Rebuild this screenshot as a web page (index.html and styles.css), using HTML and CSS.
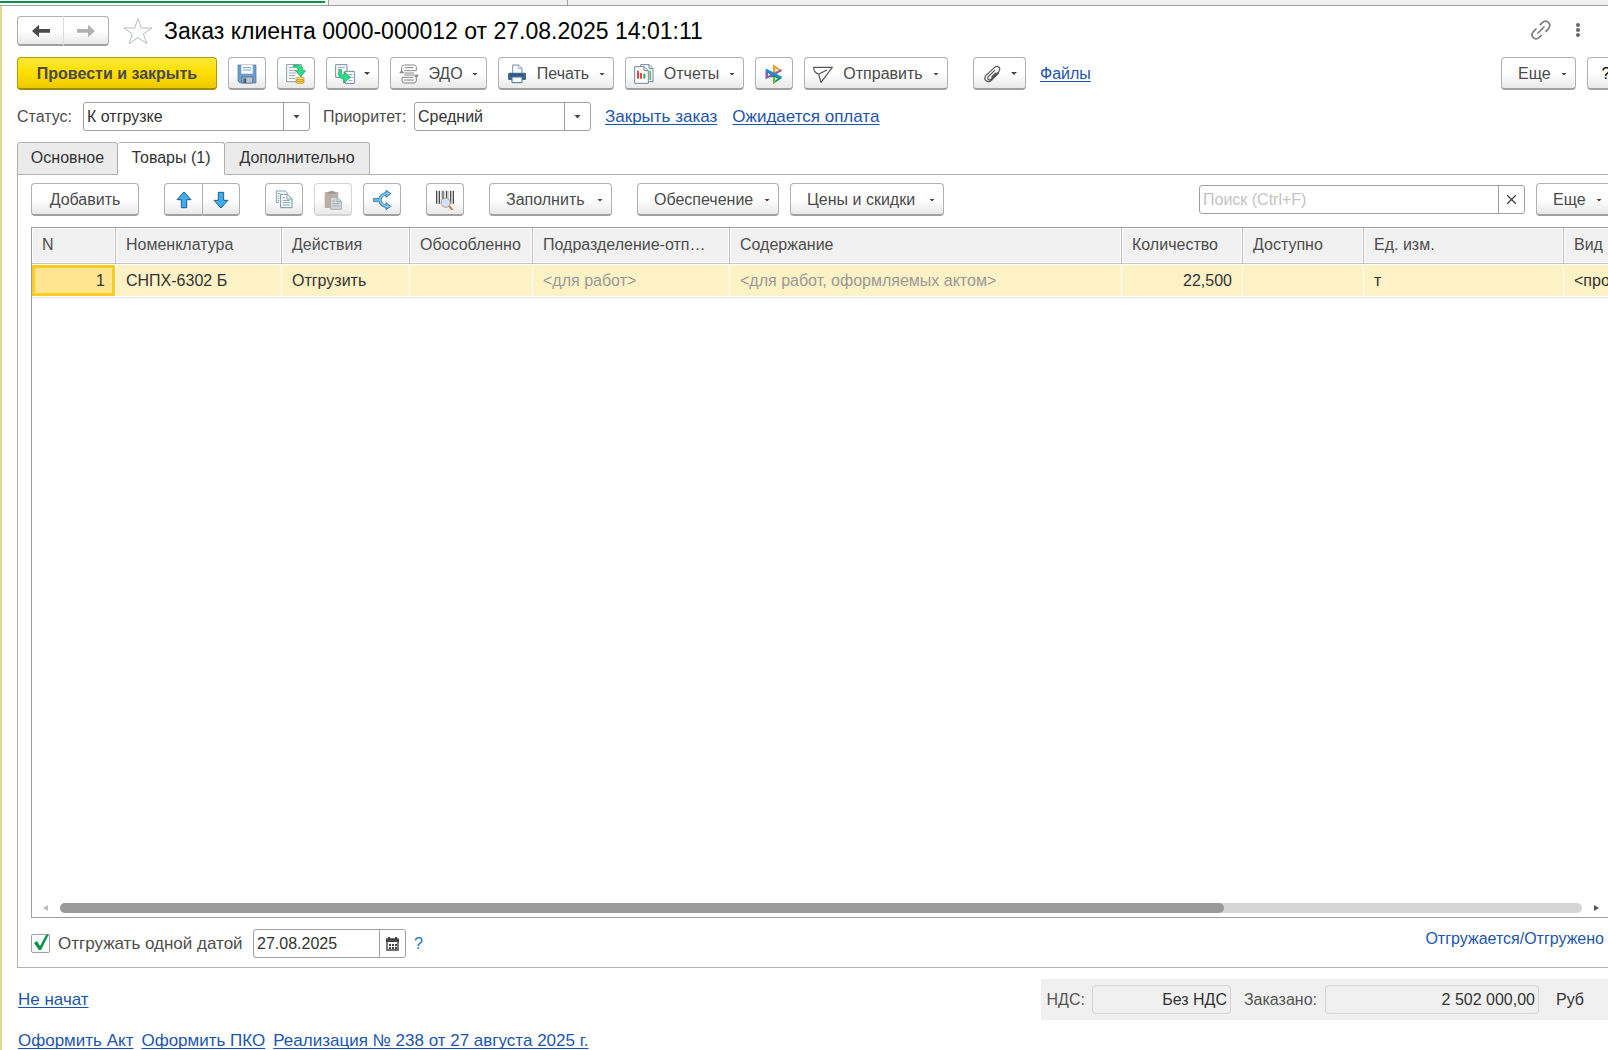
FILE: index.html
```html
<!DOCTYPE html>
<html lang="ru">
<head>
<meta charset="utf-8">
<title>Заказ клиента 0000-000012 от 27.08.2025 14:01:11</title>
<link rel="stylesheet" href="styles.css">
</head>
<body>
<div class="app">
  <div class="window-tabs"><span class="window-tab window-tab-active"></span><span class="window-tab"></span></div>
  <main class="form">
    <header class="title-row">
      <div class="button-pair nav-pair">
        <button type="button" class="btn" aria-label="Назад"><svg width="18" height="14" viewBox="0 0 54 42"><path d="M0 21 21 2v13h33v11H21v14z" fill="#4a4a4a"/></svg></button>
        <button type="button" class="btn" aria-label="Вперед"><svg width="18" height="14" viewBox="0 0 54 42"><path d="M54 21 33 2v13H0v11h33v14z" fill="#b2b2b2"/></svg></button>
      </div>
      <svg class="star" width="30" height="28" viewBox="0 0 90 84"><path d="M45 5 55 33H87L61 51 72 80 45 62 18 80 28 51 3 33H35z" fill="#fff" stroke="#b4bac2" stroke-width="3"/></svg>
      <h1>Заказ клиента 0000-000012 от 27.08.2025 14:01:11</h1>
      <div class="title-tools">
        <svg width="20" height="20" viewBox="0 0 60 60" fill="none" stroke="#7b7b7b" stroke-width="5" stroke-linecap="round"><path d="M21 39 39 21M28 14l6-6c12-12 30 4 18 18l-7 8M15 27l-8 8c-11 13 4 28 17 18l7-7"/></svg>
        <svg width="4" height="14" viewBox="0 0 12 42" fill="#686868"><circle cx="6" cy="6" r="6"/><circle cx="6" cy="21" r="6"/><circle cx="6" cy="36" r="6"/></svg>
      </div>
    </header>

    <div class="toolbar">
      <button type="button" class="btn btn-primary">Провести и закрыть</button>
      <button type="button" class="btn btn-icon" aria-label="Записать"><svg width="20" height="20" viewBox="0 0 60 60"><path d="M3 3h54v54H9l-6-6z" fill="#6f9bd1" stroke="#49709f" stroke-width="2"/><path d="M13 3h34v26H13z" fill="#fff"/><path d="M18 11h24M18 18h24" stroke="#6f9bd1" stroke-width="3"/><path d="M15 39h32v18H15z" fill="#c3c8cc" stroke="#49607c" stroke-width="2"/><path d="M19 43h9v14h-9z" fill="#3e618b"/></svg></button>
      <button type="button" class="btn btn-icon" aria-label="Провести"><svg width="20" height="20" viewBox="0 0 60 60"><path d="M2 1h44v52H2z" fill="#fff" stroke="#8799ac" stroke-width="3"/><path d="M8 11h14M8 19h22M8 27h22M8 35h20M8 43h20" stroke="#93a5b5" stroke-width="3"/><path d="M30 43h24v12c0 6-24 6-24 0z" fill="#f7c948" stroke="#b68a24" stroke-width="2"/><ellipse cx="42" cy="43" rx="12" ry="4" fill="#ffe58b" stroke="#b68a24" stroke-width="2"/><path d="M30 50c6 4 18 4 24 0" fill="none" stroke="#b68a24" stroke-width="2"/><path d="M22 4c20-4 29 4 29 16h8L44 37 28 20h9c0-8-5-11-15-10z" fill="#28e087" stroke="#148c50" stroke-width="2"/></svg></button>
      <button type="button" class="btn btn-icon-menu" aria-label="Создать на основании"><svg width="20" height="20" viewBox="0 0 60 60"><path d="M2 2h34v38H2z" fill="#fff" stroke="#728aa0" stroke-width="3"/><path d="M8 10h22M8 16h14" stroke="#93a5b5" stroke-width="3"/><path d="M30 22h28v36H30z" fill="#fff" stroke="#728aa0" stroke-width="3"/><path d="M40 32h12M44 40h10M40 50h12" stroke="#93a5b5" stroke-width="3"/><path d="M12 18c-4 16 0 24 14 27v12L46 40 27 23v10c-7 0-9-5-7-13z" fill="#28e087" stroke="#148c50" stroke-width="2"/></svg><i class="caret"></i></button>
      <button type="button" class="btn btn-menu edo"><svg width="20" height="20" viewBox="0 0 60 60" fill="none" stroke="#888" stroke-width="3"><path d="M8 21V10q0-7 8-7h30q6 0 6 7v10H16M52 38v12q0 7-7 7H15q-6 0-6-7V40h34"/><path d="M17 11h27M16 27h29M16 33h29M16 48h28"/><path d="M0 28 8 18l8 10zM44 32h16l-8 10z" fill="#888" stroke="none"/></svg><span>ЭДО</span><i class="caret"></i></button>
      <button type="button" class="btn btn-menu print"><svg width="20" height="20" viewBox="0 0 60 60"><path d="M17 3h18l10 10v16H17z" fill="#fff" stroke="#7790a8" stroke-width="3"/><path d="M34 3v11h11" fill="none" stroke="#7790a8" stroke-width="2"/><rect x="3" y="26" width="54" height="22" rx="4" fill="#416990"/><path d="M8 33h44" stroke="#29496a" stroke-width="3"/><path d="M15 39h30v17H15z" fill="#fff" stroke="#416990" stroke-width="3"/></svg><span>Печать</span><i class="caret"></i></button>
      <button type="button" class="btn btn-menu reports"><svg width="20" height="20" viewBox="0 0 60 60"><path d="M20 2h25l12 12v39H20z" fill="#fff" stroke="#71879c" stroke-width="3"/><path d="M45 2v12h12" fill="none" stroke="#71879c" stroke-width="3"/><path d="M49 20v28" stroke="#66a977" stroke-width="5"/><path d="M2 8h28l13 12v38H2z" fill="#fff" stroke="#71879c" stroke-width="3"/><path d="M30 8v12h13" fill="none" stroke="#71879c" stroke-width="3"/><path d="M12 20v24M21 27v17" stroke="#e34740" stroke-width="6"/><path d="M31 29v15" stroke="#35a65b" stroke-width="6"/></svg><span>Отчеты</span><i class="caret"></i></button>
      <button type="button" class="btn btn-icon" aria-label="Сервис"><svg width="18" height="20" viewBox="0 0 54 60"><path d="M24 1 48 18 24 29z" fill="#fa9c22"/><path d="m33 13 17 8-17 10z" fill="#e43659"/><path d="M31 13 43 19 31 25z" fill="#fff"/><path d="m2 14 48 26H2z" fill="#287fc4"/><path d="m2 24 16 10L2 46z" fill="#9b57a7"/><path d="m9 27 7 5-7 4z" fill="#fff"/><path d="m24 33 26 10-26 17z" fill="#138d4c"/><path d="M24 39v21l9-8V39z" fill="#63ba45"/><path d="m31 40 8 4-8 5z" fill="#fff"/><path d="M2 43 50 18" stroke="#8561b1" stroke-width="5"/><path d="m3 17 47 24" stroke="#1994d3" stroke-width="6"/></svg></button>
      <button type="button" class="btn btn-menu send"><svg width="20" height="20" viewBox="0 0 60 60" fill="none" stroke="#555" stroke-width="3.5" stroke-linejoin="round"><path d="M2 10h56L24 55l-7-25C7 28 2 20 2 10zM17 30l25-12"/></svg><span>Отправить</span><i class="caret"></i></button>
      <button type="button" class="btn btn-icon-menu attach" aria-label="Присоединенные файлы"><svg width="20" height="20" viewBox="0 0 60 60" fill="none" stroke="#555" stroke-width="3.5" stroke-linecap="round"><path d="M38 19 19 38c-6 7 3 13 9 7l23-23c7-12-5-19-14-11L12 34c-10 13 5 26 17 14l21-21M41 27 29 39"/></svg><i class="caret"></i></button>
      <a class="files-link" href="#files">Файлы</a>
      <button type="button" class="btn btn-text more push">Еще<i class="caret"></i></button>
      <button type="button" class="btn btn-icon help">?</button>
    </div>

    <div class="status-row">
      <label class="status-label" for="status">Статус:</label>
      <span class="combo combo-status"><select id="status"><option>К отгрузке</option></select><span class="combo-arrow"><i class="caret"></i></span></span>
      <label class="priority-label" for="priority">Приоритет:</label>
      <span class="combo combo-priority"><select id="priority"><option>Средний</option></select><span class="combo-arrow"><i class="caret"></i></span></span>
      <a href="#close">Закрыть заказ</a>
      <a href="#payment">Ожидается оплата</a>
    </div>

    <div class="tabs" role="tablist">
      <button type="button" role="tab" class="tab tab-main" aria-selected="false">Основное</button>
      <button type="button" role="tab" class="tab tab-goods" aria-selected="true">Товары (1)</button>
      <button type="button" role="tab" class="tab tab-extra" aria-selected="false">Дополнительно</button>
    </div>

    <section class="panel">
      <div class="toolbar panel-toolbar">
        <button type="button" class="btn btn-text add">Добавить</button>
        <div class="button-pair group">
          <button type="button" class="btn" aria-label="Вверх"><svg width="16" height="18" viewBox="0 0 48 54"><path d="M24 3 45 26H32v24H16V26H3z" fill="#43adeb" stroke="#17618f" stroke-width="3" stroke-linejoin="round"/></svg></button>
          <button type="button" class="btn" aria-label="Вниз"><svg width="16" height="18" viewBox="0 0 48 54"><path d="M24 51 45 28H32V4H16v24H3z" fill="#43adeb" stroke="#17618f" stroke-width="3" stroke-linejoin="round"/></svg></button>
        </div>
        <button type="button" class="btn btn-icon group" aria-label="Копировать"><svg width="18" height="20" viewBox="0 0 54 60"><path d="M4 38V3h27l8 8M4 38h8" fill="none" stroke="#7e9fb1" stroke-width="3"/><path d="M8 11h8M8 18h5M8 25h5M8 32h5" stroke="#7e9fb1" stroke-width="3"/><path d="M17 13h20l14 13v27H17z" fill="#fff" stroke="#6d91a5" stroke-width="3"/><path d="M36 13v14h15M23 23h8M23 31h22M23 38h22M23 45h22" fill="none" stroke="#7e9fb1" stroke-width="3"/></svg></button>
        <button type="button" class="btn btn-icon" disabled aria-label="Вставить"><svg width="18" height="20" viewBox="0 0 54 60"><rect x="2" y="6" width="41" height="48" rx="3" fill="#bdaea7"/><path d="M11 11q0-7 8-7 4-4 8 0 8 0 8 7z" fill="#999"/><path d="M20 22h20l12 12v24H20z" fill="#d3d6d9" stroke="#aab0b4" stroke-width="3"/><path d="M39 22v13h13M26 33h7M26 41h20M26 48h20" fill="none" stroke="#aab0b4" stroke-width="3"/></svg></button>
        <button type="button" class="btn btn-icon" aria-label="Разбить строку"><svg width="20" height="20" viewBox="0 0 60 60"><path d="M3 30h20C27 15 34 11 47 11M23 30c4 15 11 19 24 19" fill="none" stroke="#2d719f" stroke-width="10"/><path d="m42 1 14 10-14 11zM42 38l14 11-14 10z" fill="#7dcaf4" stroke="#2d719f" stroke-width="3"/><path d="M4 30h19C27 15 34 11 47 11M23 30c4 15 11 19 24 19" fill="none" stroke="#7dcaf4" stroke-width="5"/></svg></button>
        <button type="button" class="btn btn-icon group" aria-label="Поиск по штрихкоду"><svg width="20" height="20" viewBox="0 0 60 60"><path d="M5 2v39M13 2v39M24 2v39M35 2v39M47 2v39M55 2v39" stroke="#4b4b4b" stroke-width="4"/><path d="M19 2v39M30 2v39M41 2v39" stroke="#aaa" stroke-width="2"/><path d="m42 48 9 10" stroke="#b1835f" stroke-width="6" stroke-linecap="round"/><circle cx="32" cy="38" r="14" fill="#d0e1f6" stroke="#ba9b88" stroke-width="3"/></svg></button>
        <button type="button" class="btn btn-text group fill">Заполнить<i class="caret"></i></button>
        <button type="button" class="btn btn-text group supply">Обеспечение<i class="caret"></i></button>
        <button type="button" class="btn btn-text prices">Цены и скидки<i class="caret"></i></button>
        <div class="field search push"><input type="text" placeholder="Поиск (Ctrl+F)" aria-label="Поиск"><button type="button" aria-label="Очистить"><svg width="9" height="9" viewBox="0 0 9 9"><path d="m0 0 9 9M9 0 0 9" stroke="#444" stroke-width="1.3"/></svg></button></div>
        <button type="button" class="btn btn-text more">Еще<i class="caret"></i></button>
      </div>

      <div class="grid">
        <table>
          <colgroup><col class="c-n"><col class="c-item"><col class="c-action"><col class="c-separate"><col class="c-dept"><col class="c-content"><col class="c-qty"><col class="c-qty"><col class="c-unit"><col></colgroup>
          <thead><tr><th>N</th><th>Номенклатура</th><th>Действия</th><th>Обособленно</th><th>Подразделение-отп…</th><th>Содержание</th><th>Количество</th><th>Доступно</th><th>Ед. изм.</th><th class="cut">Вид цены</th></tr></thead>
          <tbody><tr><td class="num current">1</td><td>СНПХ-6302 Б</td><td>Отгрузить</td><td></td><td class="hint">&lt;для работ&gt;</td><td class="hint">&lt;для работ, оформляемых актом&gt;</td><td class="num">22,500</td><td></td><td>т</td><td class="cut">&lt;произвольная&gt;</td></tr></tbody>
        </table>
        <div class="scroll"><i class="arrow-left"></i><div class="track"><div class="thumb"></div></div><i class="arrow-right"></i></div>
      </div>

      <div class="ship-row">
        <label class="check"><span class="check-box"><input type="checkbox" checked><svg width="18" height="20" viewBox="0 0 18 20"><path d="M2 10l3-2 3 5 6-11 3-1-8 16H7z" fill="#009646"/></svg></span>Отгружать одной датой</label>
        <div class="field date"><input type="text" value="27.08.2025" aria-label="Дата отгрузки"><button type="button" aria-label="Календарь"><svg width="13" height="14" viewBox="0 0 13 14"><path d="M1 2h11v11H1z" fill="#fff" stroke="#444" stroke-width="1.4"/><path d="M0 2h13v3H0zM2 0h2v3H2zM9 0h2v3H9z" fill="#444"/><path d="M3 7h2v2H3zM6 7h2v2H6zM9 7h2v2H9zM3 10h2v2H3zM6 10h2v2H6zM9 10h2v2H9z" fill="#444"/></svg></button></div>
        <a class="hint-link" href="#help">?</a>
        <a class="shipped push" href="#shipped">Отгружается/Отгружено</a>
      </div>
    </section>

    <div class="summary-row">
      <a href="#state">Не начат</a>
      <div class="totals">
        <label for="vat">НДС:</label><input id="vat" class="vat" value="Без НДС" readonly>
        <label for="total">Заказано:</label><input id="total" class="total" value="2 502 000,00" readonly>
        <span class="currency">Руб</span>
      </div>
    </div>
    <footer class="links"><a href="#act">Оформить Акт</a><a href="#pko">Оформить ПКО</a><a href="#sale">Реализация № 238 от 27 августа 2025 г.</a></footer>
  </main>
</div>
</body>
</html>
```
FILE: styles.css
```css
* { box-sizing: border-box; }
body { margin: 0; overflow-x: hidden; background: #fff; color: #4d4d4d; font: 16px/18px "Liberation Sans", Arial, sans-serif; }
button, input, select { font: inherit; color: inherit; margin: 0; }
svg { display: block; flex: none; }
a { color: #1c55ae; text-underline-offset: 2px; text-decoration-skip-ink: none; }
.app { display: flex; flex-direction: column; min-height: 100vh; overflow: hidden; }

.window-tabs { display: flex; height: 6px; background: #f0f0f0; border-bottom: 1px solid #a0a0a0; }
.window-tab { width: 239px; border-right: 1px solid #a0a0a0; }
.window-tab-active { width: 329px; background: linear-gradient(#009646, #009646) 0 1px / 325px 2px no-repeat #fff; }

/* The form runs past the right edge of the window */
.form { flex: 1; display: flex; flex-direction: column; margin-right: -17px; padding: 10px 0 0 15px; border-left: 2px solid #e6d68e; }

.title-row { display: flex; align-items: center; height: 30px; }
.star { margin: 0 12px 0 14px; }
h1 { margin: 0 0 0 -1px; font-size: 23px; line-height: 28px; font-weight: 400; color: #000; white-space: nowrap; }
.title-tools { display: flex; align-items: center; gap: 25px; margin: 0 45px 2px auto; }

.btn { display: flex; align-items: center; justify-content: center; height: 33px; padding: 1px 0 0; border: 1px solid #b0b0b0; border-bottom: 2px solid #a0a0a0; border-radius: 4px; background: linear-gradient(#fff 50%, #e9e9e9); color: #4a4a4a; white-space: nowrap; flex: none; }
.btn:disabled { border-color: #d4d4d4; }
.btn-primary { width: 200px; border-color: #b09a12; border-bottom-color: #a08b00; background: linear-gradient(#ffe838, #ffdf00 50%, #ecc900); font-weight: 700; }
.btn-icon { width: 38px; }
.btn-icon-menu { width: 53px; gap: 9px; }
.btn-menu, .btn-text { justify-content: space-between; padding: 2px 8px 0; }
.btn-text { padding-left: 16px; }
.edo { width: 97px; }
.print { width: 116px; }
.reports { width: 119px; }
.send { width: 144px; }
.more { width: 75px; }
.add { width: 108px; justify-content: center; padding: 2px 0 0; }
.fill { width: 123px; }
.supply { width: 142px; }
.prices { width: 154px; }
.help { color: #000; padding-top: 2px; }
.caret { width: 6px; height: 3px; background: #444; clip-path: polygon(0 0, 100% 0, 50% 100%); flex: none; }

.button-pair { display: flex; }
.button-pair .btn { width: 38px; }
.button-pair .btn:first-child { width: 39px; border-radius: 4px 0 0 4px; }
.button-pair .btn:last-child { border-left: 0; border-radius: 0 4px 4px 0; width: 37px; }
.nav-pair .btn { height: 30px; }
.nav-pair .btn:first-child { width: 47px; border-right-color: #ddd; }
.nav-pair .btn:last-child { width: 45px; }

.toolbar { display: flex; align-items: center; gap: 11px; margin-top: 11px; }
.push.push { margin-left: auto; }
.group, .attach { margin-left: 14px; }
.files-link { margin-left: 3px; }

.status-row { display: flex; align-items: center; margin-top: 12px; }
.status-label { width: 66px; }
.priority-label { width: 91px; }
.combo { position: relative; height: 29px; }
.combo-status { width: 227px; margin-right: 13px; }
.combo-priority { width: 177px; margin-right: 14px; }
.combo select { width: 100%; height: 29px; padding: 0 30px 0 3px; appearance: none; border: 1px solid #a0a0a0; border-radius: 3px; background: #fff; color: #333; }
.combo-arrow { position: absolute; top: 1px; right: 1px; bottom: 1px; width: 26px; display: grid; place-items: center; border-left: 1px solid #a0a0a0; pointer-events: none; }
.combo-arrow .caret { height: 4px; width: 7px; }
.status-row a { margin-right: 15px; font-size: 17px; }

.tabs { display: flex; margin-top: 11px; position: relative; }
.tab { height: 33px; padding: 0 0 2px; border: 1px solid #b0b0b0; border-radius: 3px 3px 0 0; background: #ebebeb; color: #333; white-space: nowrap; }
.tab + .tab { border-left: 0; }
.tab-main { width: 101px; }
.tab-goods { width: 107px; }
.tab-extra { width: 145px; }
.tab[aria-selected="true"] { background: #fff; border-bottom-color: #fff; }
.panel { flex: 1; display: flex; flex-direction: column; margin-top: -1px; padding: 0 13px; border: 1px solid #b0b0b0; }
.panel-toolbar { margin: 8px 0 11px; }

.field { display: flex; height: 29px; border: 1px solid #a0a0a0; border-radius: 3px; background: #fff; }
.field input { flex: 1; min-width: 0; padding: 0 3px; border: 0; background: none; color: #333; }
.field input::placeholder { color: #c3c3c3; opacity: 1; }
.field button { display: grid; place-items: center; width: 26px; padding: 0; border: 0; border-left: 1px solid #a0a0a0; background: none; }
.search { width: 326px; }

.grid { flex: 1; display: flex; flex-direction: column; border: 1px solid #a0a0a0; overflow: hidden; }
table { width: 100%; table-layout: fixed; border-collapse: separate; border-spacing: 0; }
.c-n { width: 84px; }
.c-item { width: 166px; }
.c-action { width: 128px; }
.c-separate { width: 123px; }
.c-dept { width: 197px; }
.c-content { width: 392px; }
.c-qty { width: 121px; }
.c-unit { width: 200px; }
th, td { padding: 0 10px; text-align: left; white-space: nowrap; overflow: hidden; text-overflow: ellipsis; }
th { height: 36px; padding: 0 9px 2px 10px; font-weight: 400; background: #f1f1f1; border-right: 1px solid #bfc0c2; border-bottom: 1px solid #c4c5c9; box-shadow: inset 0 0 0 1px #fff; }
td { height: 34px; color: #333; background: #fdf1c6; border-right: 1px solid #fff; border-bottom: 1px solid #e2e2e2; box-shadow: inset 0 1px #fff, inset 0 -1px #fff; }
.num { text-align: right; }
.hint { color: #999; }
.cut { text-overflow: clip; }
.current { background: #ffe58f; box-shadow: inset 0 1px #fff, inset 0 -1px #fff, inset 0 4px #fccb20, inset 0 -4px #fccb20, inset 3px 0 #fccb20, inset -3px 0 #fccb20; }

.scroll { display: flex; align-items: center; margin: auto 11px 4px 11px; }
.track { flex: 1; height: 10px; margin: 0 12px; border-radius: 5px; background: #d5d5d5; }
.thumb { width: 76.5%; height: 10px; border-radius: 5px; background: #999; }
.arrow-left, .arrow-right { width: 5px; height: 6px; background: #bbb; clip-path: polygon(100% 0, 100% 100%, 0 50%); }
.arrow-right { background: #555; clip-path: polygon(0 0, 100% 50%, 0 100%); }

.ship-row { display: flex; align-items: center; padding: 11px 0 9px; }
.check { display: flex; align-items: center; gap: 8px; width: 222px; font-size: 17px; white-space: nowrap; }
.check-box { position: relative; display: block; width: 19px; height: 19px; }
.check input { display: block; width: 19px; height: 19px; appearance: none; border: 1px solid #a0a0a0; border-radius: 2px; background: #fff; }
.check svg { position: absolute; left: 1px; top: -1px; pointer-events: none; }
.date { width: 153px; }
.hint-link { margin-left: 8px; color: #0f77bd; text-decoration: none; }
.shipped { align-self: flex-start; margin-right: 7px; padding-top: 1px; text-decoration: none; }

.summary-row { display: flex; justify-content: space-between; align-items: center; margin-top: 11px; padding-left: 1px; font-size: 16px; }
.totals { display: flex; align-items: center; height: 41px; padding: 0 41px 0 6px; background: #f0f0f0; color: #555; }
.totals input { height: 29px; padding: 0 3px; border: 1px solid #d5d5d5; border-radius: 4px; background: none; color: #333; text-align: right; margin: 0 13px 0 7px; }
.totals .vat { width: 139px; }
.totals .total { width: 214px; margin: 0 17px 0 8px; }
.currency { color: #333; }
.summary-row > a, .links { font-size: 17px; }
.links { display: flex; gap: 8px; margin-top: 12px; padding-left: 1px; white-space: nowrap; }
```
